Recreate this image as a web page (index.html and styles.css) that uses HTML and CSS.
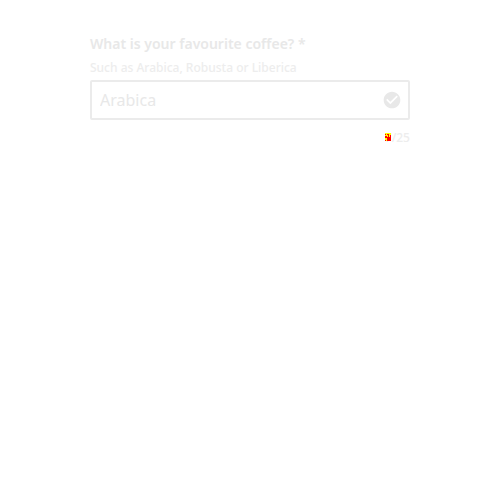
FILE: index.html
```
<!DOCTYPE html>
<html lang="en">
<head>
<meta charset="utf-8">
<meta name="viewport" content="width=device-width, initial-scale=1">
<title>Coffee</title>
<link rel="stylesheet" href="styles.css">
</head>
<body>
<main class="field">
  <label class="label" for="coffee">What is your favourite coffee? *</label>
  <p class="helper" id="coffee-help">Such as Arabica, Robusta or Liberica</p>
  <div class="control">
    <input class="input" id="coffee" type="text" value="Arabica" maxlength="25" aria-describedby="coffee-help coffee-count">
    <svg class="icon" viewBox="0 0 24 24" aria-hidden="true"><path d="M12 2C6.500 2 2 6.500 2 12s4.500 10 10 10 10-4.500 10-10S17.500 2 12 2zm-2 15-5-5 1.410-1.410L10 14.170l7.590-7.590L19 8l-9 9z"/></svg>
  </div>
  <p class="count" id="coffee-count"><span class="changed">7<svg class="pixels" viewBox="0 0 6 8" shape-rendering="crispEdges" aria-hidden="true"><path fill="#ff0" d="M0 0h6v8H0z"/><path fill="#f00" d="M0 1h1v1H0zM2 1h1v1H2zM3 1h1v3H3zM5 2h1v2H5zM0 3h2v2H0zM2 4h4v4H2zM0 7h1v1H0z"/></svg></span>/25</p>
</main>
</body>
</html>
```
FILE: styles.css
```
* {
  box-sizing: border-box;
}

body {
  margin: 0;
  padding: 32px 16px;
  background: #fff;
  color: #e8e8e8;
  font-family: "Noto Sans", sans-serif;
}

.field {
  display: flex;
  flex-direction: column;
  max-width: 320px;
  margin: 0 auto;
}

.label {
  font-size: 14px;
  font-weight: 600;
  line-height: 24px;
}

.helper,
.count {
  margin: 0;
  color: #ededed;
  font-size: 12px;
  font-weight: 500;
  line-height: 24px;
}

.control {
  display: flex;
  align-items: center;
  height: 40px;
  padding: 0 6px 0 8px;
  border: 2px solid #ebebeb;
  border-radius: 2px;
}

.input {
  flex: 1;
  min-width: 0;
  padding: 0;
  border: 0;
  outline: 0;
  background: none;
  color: #e8e8e8;
  font: 400 16px/24px "Noto Sans", sans-serif;
}

.icon {
  width: 20px;
  height: 20px;
  fill: #e8e8e8;
}

.count {
  padding-top: 6px;
  text-align: right;
}

.changed {
  position: relative;
}

.pixels {
  position: absolute;
  top: 4px;
  left: 0;
  width: 6px;
  height: 8px;
}
```
